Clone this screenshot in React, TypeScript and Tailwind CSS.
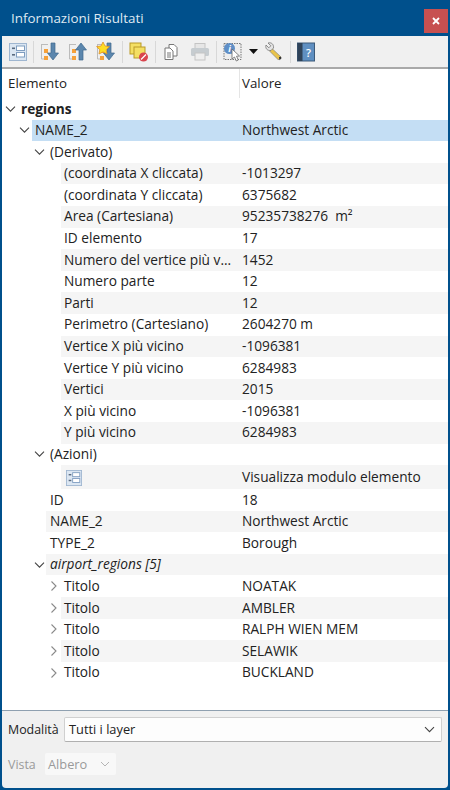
const font = { fontFamily: '"Open Sans", sans-serif' };

function Chevron({ open }: { open: boolean }) {
  return (
    <svg width="11" height="11" viewBox="0 0 11 11" fill="none" stroke={open ? "#444" : "#8a8a8a"} strokeWidth="1.1">
      {open ? <path d="M1 3.2 5.5 7.7 10 3.2" /> : <path d="M3.5 1 8 5.5 3.5 10" />}
    </svg>
  );
}

function FormIcon({ size = 18 }: { size?: number }) {
  return (
    <svg width={size} height={size} viewBox="0 0 18 18">
      <rect x="0.5" y="0.5" width="17" height="17" fill="#dbe6f2" stroke="#9fb6d0" />
      <rect x="3" y="4.5" width="3" height="1.6" fill="#5a6b80" />
      <rect x="3" y="11" width="3" height="1.6" fill="#5a6b80" />
      <rect x="7.5" y="3" width="8" height="4.5" fill="#fff" stroke="#7f9dc0" />
      <rect x="7.5" y="9.5" width="8" height="4.5" fill="#fff" stroke="#7f9dc0" />
    </svg>
  );
}

function TreeArrow({ dir, star }: { dir: "down" | "up"; star?: boolean }) {
  return (
    <svg width="20" height="20" viewBox="0 0 20 20">
      <path d="M1 2.5H8M1.5 2.5V17H8" fill="none" stroke="#bbb" />
      <rect x="4" y="7" width="4" height="4" fill="#f6a13a" />
      <rect x="4" y="14" width="4" height="4" fill="#f6a13a" />
      {dir === "down" ? (
        <path d="M11 1h4v10h3.500l-5.500 7-5.500-7H11z" fill="#5b86ad" stroke="#3f688e" strokeWidth="0.7" />
      ) : (
        <path d="M11 18h4V8h3.500l-5.500-7-5.500 7H11z" fill="#5b86ad" stroke="#3f688e" strokeWidth="0.7" />
      )}
      {star && <path d="M7 0l2 4 4.400.6-3.200 3.100.8 4.300-4-2.100-4 2.100.8-4.300L.6 4.600 5 4z" fill="#ffdd22" stroke="#e0902a" strokeWidth="0.8" />}
    </svg>
  );
}

function Sep() {
  return <div className="w-px h-[22px] bg-[#d8d8d8] mx-[6px]" />;
}

function Toolbar() {
  return (
    <div className="h-[31px] flex items-center pl-[7px] bg-[#f0f0f0] border-b-2 border-[#a9a9a9] box-content shrink-0">
      <FormIcon />
      <Sep />
      <div className="flex gap-[8px]">
        <TreeArrow dir="down" />
        <TreeArrow dir="up" />
        <TreeArrow dir="down" star />
      </div>
      <Sep />
      <svg width="20" height="20" viewBox="0 0 20 20">
        <rect x="1" y="1" width="11" height="11" fill="#f4df63" stroke="#b99a28" />
        <rect x="5" y="5" width="11" height="11" fill="#f4df63" stroke="#b99a28" />
        <circle cx="14.500" cy="15" r="4.500" fill="#d9454f" />
        <path d="M12 17.500l5-5" stroke="#fff" strokeWidth="1.200" />
      </svg>
      <Sep />
      <svg width="18" height="18" viewBox="0 0 18 18" fill="#fff" stroke="#777">
        <path d="M7 1.500h5l3 3V13H7z" />
        <path d="M3 5h5l3 3v8.500H3z" />
        <path d="M5 10h4M5 12h4M5 14h4" />
      </svg>
      <div className="w-[10px]" />
      <svg width="20" height="20" viewBox="0 0 20 20">
        <rect x="5" y="1.500" width="10" height="5" fill="#e6e6e6" stroke="#c4c4c4" />
        <rect x="1" y="6" width="18" height="8" rx="1.500" fill="#c6ccd0" />
        <rect x="5" y="11" width="10" height="7" fill="#eee" stroke="#c4c4c4" />
      </svg>
      <Sep />
      <svg width="19" height="20" viewBox="0 0 19 20">
        <rect x="1" y="1.500" width="17" height="16" fill="#eee" stroke="#777" strokeDasharray="1.500 1" />
        <circle cx="6.500" cy="6.500" r="5.500" fill="#5f8fc7" />
        <text x="6.500" y="10" textAnchor="middle" fontSize="9" fontWeight="700" fontStyle="italic" fill="#fff" style={font}>i</text>
        <path d="M9 7l0 10 2.500-2 1.800 4 2-1-1.800-3.800 3-.2z" fill="#fff" stroke="#666" strokeWidth="0.8" />
      </svg>
      <svg width="9" height="5" viewBox="0 0 9 5" className="ml-[7px]">
        <path d="M0 0h9L4.500 5z" fill="#111" />
      </svg>
      <svg width="20" height="20" viewBox="0 0 20 20" className="ml-[6px]">
        <path d="M8 6.500l9 8.500-2.500 3-9-9z" fill="#e9c44a" stroke="#777" strokeWidth="0.6" />
        <path d="M15 15l2-.2.500 1.500-2 2z" fill="#333" />
        <path d="M7 8.500C3.500 9 1 6.500 2 3l2.800 2.800 2-2L4 1c3.500-1 6 1.500 5.500 5z" fill="#e4e4e4" stroke="#777" strokeWidth="0.8" />
      </svg>
      <Sep />
      <svg width="18" height="20" viewBox="0 0 18 20">
        <rect x="0.500" y="1" width="17" height="18" fill="#5f8fc1" stroke="#3c5a7a" />
        <rect x="0.500" y="1" width="5" height="18" fill="#2f4258" />
        <text x="11.500" y="14.500" textAnchor="middle" fontSize="11" fontWeight="600" fill="#fff" style={font}>?</text>
      </svg>
    </div>
  );
}

type R = {
  label?: string;
  value?: React.ReactNode;
  indent: number;
  arrow?: boolean | "closed";
  start?: number;
  cls?: string;
  h?: string;
};

const rows: R[] = [
  { label: "regions", indent: 19, arrow: true, start: 18, cls: "font-bold" },
  { label: "NAME_2", value: "Northwest Arctic", indent: 33, arrow: true, start: 30 },
  { label: "(Derivato)", indent: 48, arrow: true, start: 44 },
  { label: "(coordinata X cliccata)", value: "-1013297", indent: 62, start: 59 },
  { label: "(coordinata Y cliccata)", value: "6375682", indent: 62, start: 59 },
  { label: "Area (Cartesiana)", value: <span>95235738276&nbsp; m²</span>, indent: 62, start: 59 },
  { label: "ID elemento", value: "17", indent: 62, start: 59 },
  { label: "Numero del vertice più v...", value: "1452", indent: 62, start: 59 },
  { label: "Numero parte", value: "12", indent: 62, start: 59 },
  { label: "Parti", value: "12", indent: 62, start: 59 },
  { label: "Perimetro (Cartesiano)", value: "2604270 m", indent: 62, start: 59 },
  { label: "Vertice X più vicino", value: "-1096381", indent: 62, start: 59 },
  { label: "Vertice Y più vicino", value: "6284983", indent: 62, start: 59 },
  { label: "Vertici", value: "2015", indent: 62, start: 59 },
  { label: "X più vicino", value: "-1096381", indent: 62, start: 59 },
  { label: "Y più vicino", value: "6284983", indent: 62, start: 59 },
  { label: "(Azioni)", indent: 48, arrow: true, start: 44 },
  { value: "Visualizza modulo elemento", indent: 62, start: 59, h: "h-[24px]" },
  { label: "ID", value: "18", indent: 48, start: 44 },
  { label: "NAME_2", value: "Northwest Arctic", indent: 48, start: 44 },
  { label: "TYPE_2", value: "Borough", indent: 48, start: 44 },
  { label: "airport_regions [5]", indent: 48, arrow: true, start: 44, cls: "italic" },
  { label: "Titolo", value: "NOATAK", indent: 62, arrow: "closed", start: 59 },
  { label: "Titolo", value: "AMBLER", indent: 62, arrow: "closed", start: 59 },
  { label: "Titolo", value: "RALPH WIEN MEM", indent: 62, arrow: "closed", start: 59 },
  { label: "Titolo", value: "SELAWIK", indent: 62, arrow: "closed", start: 59 },
  { label: "Titolo", value: "BUCKLAND", indent: 62, arrow: "closed", start: 59 },
];

function Row({ r, i }: { r: R; i: number }) {
  const selected = i === 1;
  const gray = i % 2 === 1 && !selected;
  return (
    <div className={`relative flex items-center ${r.h ?? "h-[21.6px]"} shrink-0`}>
      <div
        className={`absolute top-0 bottom-0 right-0 ${selected ? "bg-[#c4def4]" : gray ? "bg-[#f5f5f5]" : ""}`}
        style={{ left: r.start }}
      />
      <div className="relative w-[238px] shrink-0 truncate" style={{ paddingLeft: r.indent }}>
        {r.arrow && (
          <span className="absolute top-1/2 -translate-y-1/2 flex" style={{ left: r.indent - 16 }}>
            <Chevron open={r.arrow === true} />
          </span>
        )}
        <span className={r.cls}>
          {r.label ?? (
            <span className="inline-flex align-middle ml-[2px]">
              <FormIcon size={16} />
            </span>
          )}
        </span>
      </div>
      <div className="relative pl-[2px] whitespace-nowrap">{r.value}</div>
    </div>
  );
}

export default function App() {
  return (
    <div className="w-[450px] h-[790px] flex flex-col bg-[#00508c] overflow-hidden text-[13.7px] text-[#222]" style={font}>
      <div className="h-[36px] flex items-center justify-between shrink-0 pl-[11px] pr-[2px] text-[13.4px]">
        <span className="text-[#dfe9f2]">Informazioni Risultati</span>
        <div className="w-[24px] h-[24px] bg-[#c75050] flex items-center justify-center mb-[-6px]">
          <svg width="8" height="8" viewBox="0 0 8 8" stroke="#fff" strokeWidth="1.800"><path d="M1 1l6 6M7 1L1 7" /></svg>
        </div>
      </div>
      <div className="flex-1 flex flex-col mx-[2px] mb-[2px] bg-[#f0f0f0] rounded-b-[4px] overflow-hidden min-h-0">
        <Toolbar />
        <div className="h-[642px] bg-white border-b border-[#8fa0b0] shrink-0 overflow-hidden flex flex-col">
          <div className="h-[29px] flex items-center shrink-0 text-[13.3px]">
            <div className="w-[238px] pl-[6px] pt-[1px] border-r border-[#e5e5e5] h-full flex items-center">Elemento</div>
            <div className="pl-[2px] pt-[1px]">Valore</div>
          </div>
          {rows.map((r, i) => (
            <Row key={i} r={r} i={i} />
          ))}
        </div>
        <div className="flex items-center h-[25px] mt-[6px] shrink-0 text-[12.8px]">
          <span className="ml-[6px] w-[56px] pt-[1px] text-[12.4px]">Modalità</span>
          <div className="w-[378px] h-[25px] bg-[#fdfdfd] border border-[#d0d0d0] border-b-[#b0b0b0] rounded-[2px] flex items-center justify-between pl-[4px] pr-[6px]">
            <span className="pt-[1px]">Tutti i layer</span>
            <Chevron open />
          </div>
        </div>
        <div className="flex items-center h-[22px] mt-[11px] shrink-0 text-[#9a9a9a] text-[12.8px]">
          <span className="ml-[6px] w-[37px] pt-[2px] text-[12.4px]">Vista</span>
          <div className="w-[71px] h-[22px] bg-[#f8f8f8] rounded-[2px] flex items-center justify-between pl-[3px] pr-[6px]">
            <span className="pt-[1px]">Albero</span>
            <svg width="10" height="6" viewBox="0 0 10 6" fill="none" stroke="#b5b5b5"><path d="M1 1l4 4 4-4" /></svg>
          </div>
        </div>
      </div>
    </div>
  );
}
